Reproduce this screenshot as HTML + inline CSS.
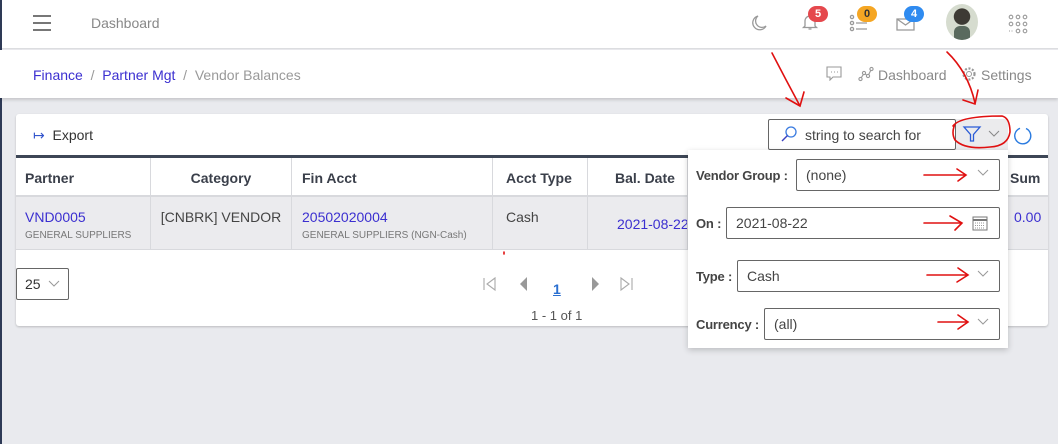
<!DOCTYPE html>
<html><head><meta charset="utf-8"><style>
*{box-sizing:border-box;margin:0;padding:0}
body{width:1058px;height:444px;overflow:hidden;background:#e9eaee;font-family:"Liberation Sans","DejaVu Sans",sans-serif;position:relative;color:#333}
.abs{position:absolute;white-space:nowrap}
.hdr{left:0;top:0;width:1058px;height:49px;background:#fff;border-bottom:1px solid #dcdde0}
.bc{left:0;top:50px;width:1058px;height:48px;background:#fff;box-shadow:0 2px 3px rgba(0,0,0,.15)}
.lb{left:0;top:0;width:2px;height:444px;background:#2e3a56}
.card{left:16px;top:114px;width:1032px;height:212px;background:#fff;border-radius:3px;box-shadow:0 1px 2px rgba(0,0,0,.2)}
.thick{left:16px;top:155px;width:1032px;height:3px;background:#3d4656}
.th{top:158px;height:39px;background:#fff;font-weight:bold;font-size:14px;color:#3a3f4a;line-height:40px;border-right:1px solid #d8d9dd;border-bottom:2px solid #d8d9dd}
.td{top:197px;height:53px;background:#ebebee;font-size:14px;border-right:1px solid #d8d9dd;border-bottom:1px solid #d8d9dd;padding-top:12px}
.lnk{color:#3b2fd0}
.sm{font-size:10px;color:#777;margin-top:5px}
.pop{left:688px;top:150px;width:320px;height:198px;background:#fff;box-shadow:0 2px 6px rgba(0,0,0,.2)}
.lab{font-size:13px;font-weight:bold;color:#444;letter-spacing:-0.2px}
.inp{border:1px solid #666;border-radius:2px;height:32px;font-size:14px;color:#444;line-height:30px;padding-left:9px;background:#fff}
.chev{position:absolute;right:10px;top:9px}
</style></head><body>
<div class="abs hdr"></div>
<div class="abs lb"></div>
<div class="abs" style="left:33px;top:15px;width:18px;height:2px;background:#777"></div>
<div class="abs" style="left:33px;top:22px;width:18px;height:2px;background:#777"></div>
<div class="abs" style="left:33px;top:29px;width:18px;height:2px;background:#777"></div>
<div class="abs" style="left:91px;top:15px;font-size:14px;color:#888">Dashboard</div>
<svg class="abs" style="left:748px;top:12px" width="22" height="22" viewBox="0 0 22 22"><path d="M10 4a7 7 0 1 0 8 10a6 6 0 0 1-8-10z" fill="none" stroke="#999" stroke-width="1.3"/></svg>
<svg class="abs" style="left:800px;top:12px" width="20" height="20" viewBox="0 0 20 20"><path d="M5 14V9a5 5 0 0 1 10 0v5l1.5 1.5h-13z M8.5 17h3" fill="none" stroke="#999" stroke-width="1.3"/></svg>
<div class="abs" style="left:808px;top:6px;width:20px;height:16px;border-radius:8px;background:#e5484d;color:#fff;font-size:11px;font-weight:bold;text-align:center;line-height:16px">5</div>
<svg class="abs" style="left:849px;top:13px" width="20" height="20" viewBox="0 0 20 20"><g fill="none" stroke="#999" stroke-width="1.3"><circle cx="3" cy="4" r="1.6"/><circle cx="3" cy="10" r="1.6"/><circle cx="3" cy="16" r="1.6"/><path d="M7 10h11M7 16h11"/></g></svg>
<div class="abs" style="left:857px;top:6px;width:20px;height:16px;border-radius:8px;background:#f5a623;color:#333;font-size:11px;font-weight:bold;text-align:center;line-height:16px">0</div>
<svg class="abs" style="left:896px;top:15px" width="20" height="16" viewBox="0 0 20 16"><path d="M1 4h17v11H1z M1 4l8.5 6l8.5-6" fill="none" stroke="#999" stroke-width="1.3"/></svg>
<div class="abs" style="left:904px;top:6px;width:20px;height:16px;border-radius:8px;background:#2f8bf0;color:#fff;font-size:11px;font-weight:bold;text-align:center;line-height:16px">4</div>
<div class="abs" style="left:946px;top:4px;width:32px;height:36px;border-radius:50%;background:radial-gradient(circle at 50% 35%,#3d3a34 0 28%,#d6dccf 30%);overflow:hidden"><div style="position:absolute;left:8px;top:22px;width:16px;height:14px;background:#5a6a5e;border-radius:6px 6px 0 0"></div></div>
<svg class="abs" style="left:1008px;top:14px" width="20" height="20" viewBox="0 0 20 20"><g fill="none" stroke="#999" stroke-width="1.1"><circle cx="3" cy="3" r="1.8"/><circle cx="10" cy="3" r="1.8"/><circle cx="17" cy="3" r="1.8"/><circle cx="3" cy="10" r="1.8"/><circle cx="10" cy="10" r="1.8"/><circle cx="17" cy="10" r="1.8"/><circle cx="10" cy="17" r="1.8"/><circle cx="17" cy="17" r="1.8"/></g><path d="M1 17h5" stroke="#999" stroke-dasharray="1 1.5"/></svg>

<div class="abs bc"></div>
<div class="abs" style="left:33px;top:67px;font-size:14px;color:#999"><span class="lnk">Finance</span> &nbsp;/&nbsp; <span class="lnk">Partner Mgt</span> &nbsp;/&nbsp; Vendor Balances</div>
<svg class="abs" style="left:826px;top:66px" width="16" height="15" viewBox="0 0 16 15"><path d="M1 1h14v10H7l-3 3v-3H1z" fill="none" stroke="#999" stroke-width="1.1"/><path d="M5 6h1M8 6h1M11 6h1" stroke="#999"/></svg>
<svg class="abs" style="left:858px;top:66px" width="16" height="16" viewBox="0 0 16 16"><g fill="none" stroke="#999" stroke-width="1.1"><circle cx="2.5" cy="13" r="1.6"/><circle cx="6" cy="7" r="1.6"/><circle cx="10" cy="10" r="1.6"/><circle cx="13.5" cy="3" r="1.6"/><path d="M3.3 11.6l2-3M7.3 8l1.5 1.2M10.7 8.5l2-4"/></g></svg>
<div class="abs" style="left:878px;top:67px;font-size:14px;color:#888">Dashboard</div>
<svg class="abs" style="left:961px;top:66px" width="16" height="16" viewBox="0 0 16 16"><circle cx="8" cy="8" r="2.5" fill="none" stroke="#999"/><circle cx="8" cy="8" r="5.5" fill="none" stroke="#999" stroke-width="2.2" stroke-dasharray="2 1.6"/></svg>
<div class="abs" style="left:981px;top:67px;font-size:14px;color:#888">Settings</div>

<div class="abs card"></div>
<div class="abs" style="left:33px;top:127px;font-size:14px;color:#333"><span style="color:#3355cc">&#x21A6;</span>&nbsp; Export</div>
<div class="abs" style="left:768px;top:119px;width:188px;height:31px;border:1px solid #666;border-radius:2px;background:#fff"></div>
<svg class="abs" style="left:780px;top:125px" width="18" height="18" viewBox="0 0 18 18"><circle cx="11" cy="7" r="5" fill="none" stroke="#3a7be0" stroke-width="1.3"/><path d="M7.5 10.5L2 16" stroke="#3a40c0" stroke-width="1.4"/></svg>
<div class="abs" style="left:805px;top:127px;font-size:14px;color:#444">string to search for</div>
<div class="abs" style="left:956px;top:119px;width:52px;height:31px;background:#ebebed"></div>
<svg class="abs" style="left:962px;top:125px" width="20" height="18" viewBox="0 0 20 18"><path d="M2 2h16l-6.5 7.5V16h-3V9.5z" fill="none" stroke="#2a5bd7" stroke-width="1.3"/></svg>
<svg class="abs" style="left:988px;top:130px" width="12" height="8" viewBox="0 0 12 8"><path d="M1 1l5 5l5-5" fill="none" stroke="#888"/></svg>
<svg class="abs" style="left:1014px;top:124px" width="20" height="22" viewBox="0 0 20 22"><path d="M12 4.5A8 8 0 1 1 6 4.3" fill="none" stroke="#2a7be0" stroke-width="1.4"/></svg>

<div class="abs thick"></div>
<div class="abs th" style="left:16px;width:135px;padding-left:9px">Partner</div>
<div class="abs th" style="left:151px;width:141px;text-align:center">Category</div>
<div class="abs th" style="left:292px;width:201px;padding-left:10px">Fin Acct</div>
<div class="abs th" style="left:493px;width:95px;padding-left:13px">Acct Type</div>
<div class="abs th" style="left:588px;width:100px;padding-left:27px">Bal. Date</div>
<div class="abs th" style="left:688px;width:360px;border-right:none"></div>
<div class="abs th" style="left:1008px;width:40px;border-right:none;padding-left:2px">Sum</div>
<div class="abs td" style="left:16px;width:135px;padding-left:9px"><div class="lnk">VND0005</div><div class="sm">GENERAL SUPPLIERS</div></div>
<div class="abs td" style="left:151px;width:141px;text-align:center;color:#444">[CNBRK] VENDOR</div>
<div class="abs td" style="left:292px;width:201px;padding-left:10px"><div class="lnk">20502020004</div><div class="sm">GENERAL SUPPLIERS (NGN-Cash)</div></div>
<div class="abs td" style="left:493px;width:95px;padding-left:13px;color:#444">Cash</div>
<div class="abs td" style="left:588px;width:100px;padding-left:29px;padding-top:19px;overflow:hidden"><span class="lnk">2021-08-22</span></div>
<div class="abs td" style="left:688px;width:360px;border-right:none;padding-left:326px;padding-top:12px"><span class="lnk">0.00</span></div>

<div class="abs" style="left:16px;top:268px;width:53px;height:32px;border:1px solid #666;border-radius:2px;font-size:14px;line-height:30px;padding-left:8px;color:#333">25</div>
<svg class="abs" style="left:48px;top:280px" width="12" height="8" viewBox="0 0 12 8"><path d="M1 1l5 5l5-5" fill="none" stroke="#999"/></svg>
<svg class="abs" style="left:483px;top:276px" width="160" height="18" viewBox="0 0 160 18"><path d="M1 2v12M12 2l-8 6l8 6z" fill="none" stroke="#aaa" stroke-width="1.1"/><path d="M44 1l-7 7l7 7z" fill="#999"/><path d="M109 1l7 7l-7 7z" fill="#999"/><path d="M138 2l8 6l-8 6zM149 2v12" fill="none" stroke="#aaa" stroke-width="1.1"/></svg>
<div class="abs" style="left:553px;top:281px;font-size:14px;font-weight:bold;color:#2a6fd0;text-decoration:underline">1</div>
<div class="abs" style="left:531px;top:308px;font-size:13px;color:#555">1 - 1 of 1</div>

<div class="abs pop"></div>
<div class="abs lab" style="left:696px;top:168px">Vendor Group :</div>
<div class="abs inp" style="left:796px;top:159px;width:204px">(none)<svg class="chev" width="12" height="8" viewBox="0 0 12 8"><path d="M1 1l5 5l5-5" fill="none" stroke="#999"/></svg></div>
<div class="abs lab" style="left:696px;top:216px">On :</div>
<div class="abs inp" style="left:726px;top:207px;width:274px">2021-08-22<svg style="position:absolute;right:11px;top:7px" width="16" height="16" viewBox="0 0 16 16"><rect x="1" y="2" width="14" height="13" fill="none" stroke="#777"/><path d="M1 5h14" stroke="#777" stroke-width="2"/><path d="M3 8h10M3 10.5h10M3 13h10" stroke="#999" stroke-dasharray="1 1"/></svg></div>
<div class="abs lab" style="left:696px;top:269px">Type :</div>
<div class="abs inp" style="left:737px;top:260px;width:263px">Cash<svg class="chev" width="12" height="8" viewBox="0 0 12 8"><path d="M1 1l5 5l5-5" fill="none" stroke="#999"/></svg></div>
<div class="abs lab" style="left:696px;top:317px">Currency :</div>
<div class="abs inp" style="left:764px;top:308px;width:236px">(all)<svg class="chev" width="12" height="8" viewBox="0 0 12 8"><path d="M1 1l5 5l5-5" fill="none" stroke="#999"/></svg></div>

<svg class="abs" style="left:0;top:0" width="1058" height="444" viewBox="0 0 1058 444"><g fill="none" stroke="#e01010" stroke-width="1.6" stroke-linecap="round">
<path d="M772 53Q786 80 800 106M786 98L800 106L804 92"/>
<path d="M947 52Q968 72 975 103M963 100L975 104L978 90"/>
<path d="M953 126Q960 116 1002 116Q1010 118 1010 132Q1008 146 990 147Q965 150 955 140Q951 133 955 124"/>
<path d="M924 175H966M957 169L966 175L958 181"/>
<path d="M924 223H962M950 216L962 223L955 230"/>
<path d="M927 275H968M958 268L968 275L957 282"/>
<path d="M938 322H968M958 315L968 322L958 329"/>
<path d="M504 252v2"/>
</g></svg>
</body></html>
